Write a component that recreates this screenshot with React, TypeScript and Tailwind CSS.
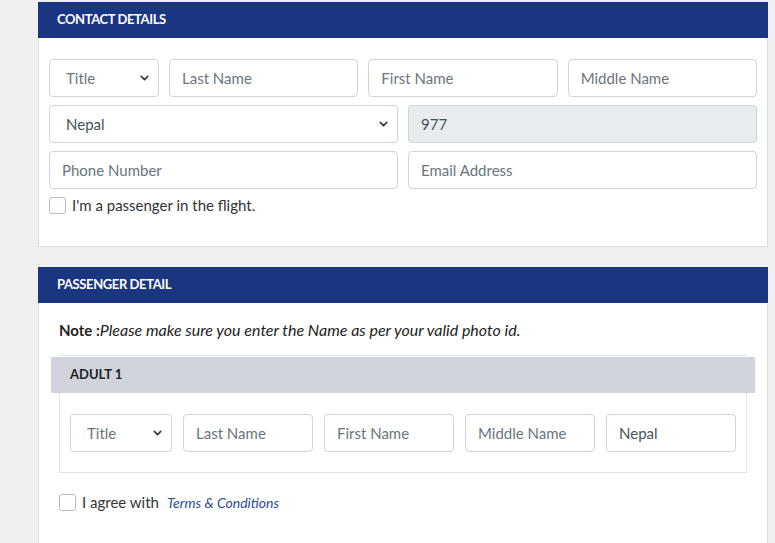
import { ChevronDown } from "lucide-react";

const font = { fontFamily: "Lato, 'Open Sans', sans-serif" };

function Field({ placeholder, className = "" }: { placeholder: string; className?: string }) {
  return (
    <input
      placeholder={placeholder}
      className={`h-[38px] min-w-0 rounded-[4px] border border-[#ced4da] bg-white px-3 text-[15px] text-[#495057] placeholder:text-[#6c757d] outline-none ${className}`}
    />
  );
}

function Select({ value, className = "", muted = false }: { value: string; className?: string; muted?: boolean }) {
  return (
    <div className={`relative shrink-0 ${className}`}>
      <select
        defaultValue={value}
        className={`h-[38px] w-full appearance-none rounded-[4px] border border-[#ced4da] bg-white pl-4 pr-8 text-[15px] outline-none ${
          muted ? "text-[#6c757d]" : "text-[#495057]"
        }`}
      >
        <option>{value}</option>
      </select>
      <ChevronDown
        size={13}
        strokeWidth={3}
        className="pointer-events-none absolute right-[8px] top-1/2 -translate-y-1/2 text-[#343a40]"
      />
    </div>
  );
}

function Box() {
  return <span className="h-[17px] w-[17px] shrink-0 rounded-[3px] border border-[#b8bcc4] bg-white" />;
}

export default function App() {
  return (
    <main className="min-h-screen bg-[#f0f0f0] pl-[38px] pr-[7px] pt-[2px]" style={font}>
      <section>
        <div className="flex h-[36px] items-center bg-[#1b3680] px-[19px] text-[13px] font-bold tracking-[-0.4px] text-white">
          CONTACT DETAILS
        </div>
        <div className="border border-t-0 border-[#dcdde2] bg-white px-[10px] pb-[32px] pt-[21px]">
          <div className="flex gap-[10px]">
            <Select value="Title" muted className="w-[110px]" />
            <Field placeholder="Last Name" className="flex-1" />
            <Field placeholder="First Name" className="flex-1" />
            <Field placeholder="Middle Name" className="flex-1" />
          </div>
          <div className="mt-2 grid grid-cols-2 gap-[10px]">
            <Select value="Nepal" />
            <input
              disabled
              defaultValue="977"
              className="h-[38px] min-w-0 rounded-[4px] border border-[#ced4da] bg-[#e9ecef] px-3 text-[15px] text-[#495057]"
            />
          </div>
          <div className="mt-2 grid grid-cols-2 gap-[10px]">
            <Field placeholder="Phone Number" />
            <Field placeholder="Email Address" />
          </div>
          <label className="mt-2 flex items-center gap-[6px] text-[15px] leading-[17px] text-[#333]">
            <Box />
            I'm a passenger in the flight.
          </label>
        </div>
      </section>

      <section className="mt-[20px]">
        <div className="flex h-[36px] items-center bg-[#1b3680] px-[19px] text-[13px] font-bold tracking-[-0.4px] text-white">
          PASSENGER DETAIL
        </div>
        <div className="border border-t-0 border-[#dcdde2] bg-white px-[20px] pb-[40px] pt-[17px]">
          <p className="text-[15px] leading-[20px] text-[#222]">
            <span className="font-bold">Note :</span>
            <span className="text-[16px] italic">Please make sure you enter the Name as per your valid photo id.</span>
          </p>
          <div className="mt-[15px] border-t border-[#e2e3e6] pt-[1px]">
            <div className="-mx-2 flex h-[36px] items-center bg-[#d0d3dc] px-[19px] text-[13px] font-bold text-[#222]">
              ADULT 1
            </div>
            <div className="flex gap-[11px] border border-t-0 border-[#e2e3e6] px-[10px] pb-[20px] pt-[21px]">
              <Select value="Title" muted className="w-[102px]" />
              <Field placeholder="Last Name" className="w-[130px]" />
              <Field placeholder="First Name" className="w-[130px]" />
              <Field placeholder="Middle Name" className="w-[130px]" />
              <input
                defaultValue="Nepal"
                className="h-[38px] w-[130px] min-w-0 rounded-[4px] border border-[#ced4da] bg-white px-3 text-[15px] text-[#495057] outline-none"
              />
            </div>
          </div>
          <div className="mt-[21px] flex items-center gap-[6px] text-[15px] leading-[17px] text-[#333]">
            <Box />
            I agree with
            <a href="#" className="ml-[2px] text-[14px] italic text-[#2a4a9c]">
              Terms &amp; Conditions
            </a>
          </div>
        </div>
      </section>
    </main>
  );
}
